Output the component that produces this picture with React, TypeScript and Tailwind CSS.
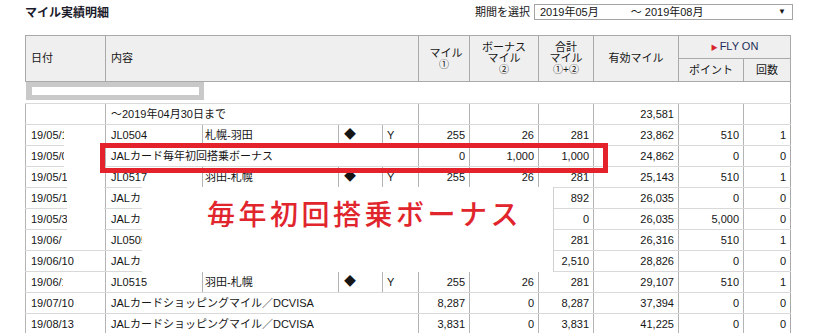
import React from "react";

type Row = {
  date?: string;
  flight?: string;
  route?: string;
  dia?: boolean;
  cls?: string;
  content?: string;
  m?: string;
  b?: string;
  t?: string;
  y: string;
  p?: string;
  c?: string;
};

const rows: Row[] = [
  { content: "～2019年04月30日まで", y: "23,581" },
  { date: "19/05/1", flight: "JL0504", route: "札幌-羽田", dia: true, cls: "Y", m: "255", b: "26", t: "281", y: "23,862", p: "510", c: "1" },
  { date: "19/05/0", content: "JALカード毎年初回搭乗ボーナス", m: "0", b: "1,000", t: "1,000", y: "24,862", p: "0", c: "0" },
  { date: "19/05/1", flight: "JL0517", route: "羽田-札幌", dia: true, cls: "Y", m: "255", b: "26", t: "281", y: "25,143", p: "510", c: "1" },
  { date: "19/05/1", content: "JALカードショッピングマイル／DCVISA", m: "892", b: "0", t: "892", y: "26,035", p: "0", c: "0" },
  { date: "19/05/3", content: "JALカードFLY ONポイント", m: "0", b: "0", t: "0", y: "26,035", p: "5,000", c: "0" },
  { date: "19/06/", flight: "JL0505", route: "札幌-羽田", dia: true, cls: "Y", m: "255", b: "26", t: "281", y: "26,316", p: "510", c: "1" },
  { date: "19/06/10", content: "JALカードショッピングマイル／DCVISA", m: "2,510", b: "0", t: "2,510", y: "28,826", p: "0", c: "0" },
  { date: "19/06/1", flight: "JL0515", route: "羽田-札幌", dia: true, cls: "Y", m: "255", b: "26", t: "281", y: "29,107", p: "510", c: "1" },
  { date: "19/07/10", content: "JALカードショッピングマイル／DCVISA", m: "8,287", b: "0", t: "8,287", y: "37,394", p: "0", c: "0" },
  { date: "19/08/13", content: "JALカードショッピングマイル／DCVISA", m: "3,831", b: "0", t: "3,831", y: "41,225", p: "0", c: "0" },
];

const patches: { left: number; top: number; h: number }[] = [
  { left: 64, top: 125, h: 42 },
  { left: 67, top: 167, h: 63 },
  { left: 62, top: 230, h: 20 },
  { left: 63, top: 272, h: 20 },
];

const td = "h-[21px] p-0 border border-x-[#b4b4b4] border-y-[#d9d9d9] whitespace-nowrap overflow-hidden leading-[20px]";
const num = td + " text-right pr-[4px]";
const th = "p-0 border border-[#a9a9a9] bg-[#efefef] font-normal text-[11px] leading-[11px] whitespace-nowrap";

export default function App() {
  return (
    <div className="relative h-[333px] w-[820px] overflow-hidden bg-white text-[11px] text-[#151515] font-['Liberation_Sans','Noto_Sans_CJK_JP',sans-serif]">
      <div className="flex h-[35px] items-start justify-between pl-[25px] pr-[27px]">
        <h1 className="mt-[6px] text-[12px] font-bold leading-[14px] text-[#1b1b2b]">マイル実績明細</h1>
        <div className="mt-[4px] flex items-center gap-[4px]">
          <span className="text-[11px] leading-[15px]">期間を選択</span>
          <div className="flex h-[16px] w-[259px] items-center border border-[#a5a5a5] pl-[5px] pr-[6px] leading-[14px]">
            <span>2019年05月</span>
            <span className="ml-[32px]">～ 2019年08月</span>
            <span className="ml-auto text-[8px]">▼</span>
          </div>
        </div>
      </div>

      <table className="ml-[25px] w-[766px] table-fixed border-collapse">
        <colgroup>
          <col className="w-[80px]" />
          <col className="w-[97px]" />
          <col className="w-[136px]" />
          <col className="w-[44px]" />
          <col className="w-[36px]" />
          <col className="w-[51px]" />
          <col className="w-[69px]" />
          <col className="w-[55px]" />
          <col className="w-[85px]" />
          <col className="w-[65px]" />
          <col className="w-[47px]" />
        </colgroup>
        <thead>
          <tr className="h-[23px]">
            <th rowSpan={2} className={th + " pl-[5px] text-left"}>日付</th>
            <th rowSpan={2} colSpan={4} className={th + " pl-[5px] text-left"}>内容</th>
            <th rowSpan={2} className={th + " text-center"}>
              <div className="pl-[4px]">マイル</div>
              <div className="text-[10px] leading-[11px]">①</div>
            </th>
            <th rowSpan={2} className={th + " text-center"}>
              <div>ボーナス</div>
              <div>マイル</div>
              <div className="text-[10px] leading-[11px]">②</div>
            </th>
            <th rowSpan={2} className={th + " text-center"}>
              <div>合計</div>
              <div>マイル</div>
              <div className="text-[10px] leading-[11px]">①+②</div>
            </th>
            <th rowSpan={2} className={th + " text-center"}>有効マイル</th>
            <th colSpan={2} className={th + " text-center text-[#1d2d58]"}>
              <span className="mr-[2px] text-[7px] text-[#d8232a]">▶</span>FLY ON
            </th>
          </tr>
          <tr className="h-[23px]">
            <th className={th + " text-center"}>ポイント</th>
            <th className={th + " text-center"}>回数</th>
          </tr>
        </thead>
        <tbody>
          <tr>
            <td colSpan={11} className="h-[22px] border-b border-r border-b-[#d9d9d9] border-r-[#a9a9a9] p-0 align-top">
              <div className="h-[18px] w-[178px] bg-[#c9c9c9] py-[5px] pl-[6px] pr-[5px]">
                <div className="h-[8px] bg-white" />
              </div>
            </td>
          </tr>
          {rows.map((r, i) => (
            <tr key={i}>
              <td className={td + " pl-[5px]"}>{r.date ?? ""}</td>
              {r.content !== undefined ? (
                <td colSpan={4} className={td + " pl-[5px]"}>{r.content}</td>
              ) : (
                <>
                  <td className={td + " pl-[5px]"}>{r.flight}</td>
                  <td className={td + " pl-[2px]"}>{r.route}</td>
                  <td className={td + " pl-[5px] text-[12px]"}>{r.dia ? "◆" : ""}</td>
                  <td className={td + " pl-[4px]"}>{r.cls}</td>
                </>
              )}
              <td className={num}>{r.m ?? ""}</td>
              <td className={num}>{r.b ?? ""}</td>
              <td className={num}>{r.t ?? ""}</td>
              <td className={num}>{r.y}</td>
              <td className={num}>{r.p ?? ""}</td>
              <td className={num + " border-r-[#a9a9a9]"}>{r.c ?? ""}</td>
            </tr>
          ))}
        </tbody>
      </table>

      {patches.map((p, i) => (
        <div
          key={i}
          className="absolute bg-white"
          style={{ left: p.left, top: p.top, width: 104 - p.left, height: p.h }}
        />
      ))}

      <div className="absolute left-[142px] top-[187px] h-[85px] w-[412px] border-r border-[#d0d0d0] bg-white pl-[65px] pt-[12px]">
        <div className="whitespace-nowrap text-[28px] font-medium leading-[28px] tracking-[3.5px] text-[#e1252d] font-['Noto_Sans_CJK_JP',sans-serif]">
          毎年初回搭乗ボーナス
        </div>
      </div>

      <div className="absolute left-[100px] top-[143px] h-[30px] w-[508px] border-[5px] border-[#e3222b]" />
    </div>
  );
}
